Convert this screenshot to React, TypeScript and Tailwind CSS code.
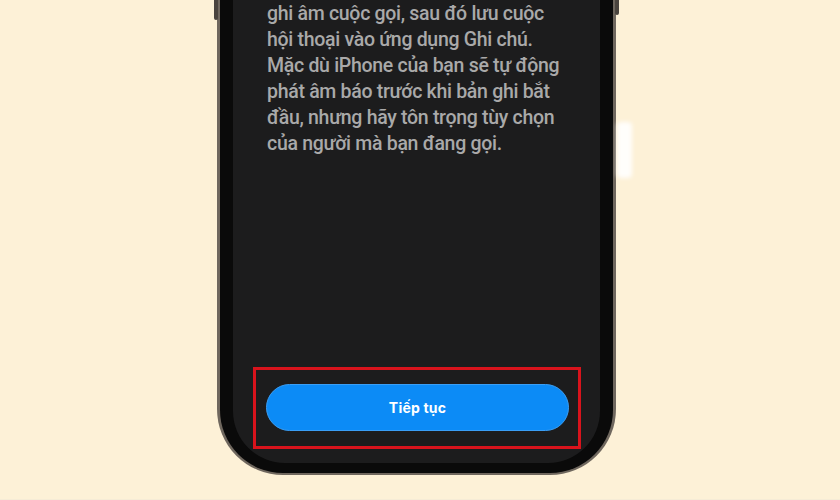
import React from "react";

const lines = [
  "ghi âm cuộc gọi, sau đó lưu cuộc",
  "hội thoại vào ứng dụng Ghi chú.",
  "Mặc dù iPhone của bạn sẽ tự động",
  "phát âm báo trước khi bản ghi bắt",
  "đầu, nhưng hãy tôn trọng tùy chọn",
  "của người mà bạn đang gọi.",
];

export default function App() {
  return (
    <div className="relative w-[840px] h-[500px] overflow-hidden bg-[#fdf1d7]" style={{ fontFamily: "Inter, 'Noto Sans', sans-serif" }}>
      {/* soft white reflection */}
      <div className="absolute left-[617px] top-[122px] w-[15px] h-[56px] bg-white/90 rounded-[4px] blur-[2px]" />
      {/* side buttons */}
      <div className="absolute left-[214px] top-0 w-[4px] h-[20px] bg-[#4a443e] rounded-b-[2px]" />
      <div className="absolute left-[615px] top-0 w-[4px] h-[15px] bg-[#4a443e] rounded-b-[2px]" />

      <div className="ml-[217px] w-[399px] h-[475px] bg-[#6f675e] rounded-b-[66px] px-[3px] pb-[2px]">
        <div className="h-full bg-[#0a0a0a] rounded-b-[63px] px-[13px] pb-[10px]">
          <div className="h-full bg-[#1c1c1d] rounded-b-[52px] flex flex-col">
            <div className="pl-[34px] pt-[1px] text-[19.5px] leading-[26px] font-medium text-[#a9a9a9] tracking-[-0.3px]" style={{ fontFamily: "Roboto, 'Noto Sans', sans-serif" }}>
              {lines.map((l) => (
                <div key={l} className="whitespace-nowrap">{l}</div>
              ))}
            </div>
            <div className="flex-1" />
            <div className="ml-[20px] mr-[19px] mb-[14px] border-[3px] border-[#d8131c] pt-[14px] pb-[15px] pl-[10px] pr-[9px]">
              <div className="h-[47px] rounded-full bg-[#0c8bf6] border border-[#3a9ef5] flex items-center justify-center text-white text-[14px] font-bold tracking-[0.2px]">
                Tiếp tục
              </div>
            </div>
          </div>
        </div>
      </div>
      <div className="absolute left-0 bottom-0 w-full h-[1px] bg-[#f6ecd6]" />
    </div>
  );
}
